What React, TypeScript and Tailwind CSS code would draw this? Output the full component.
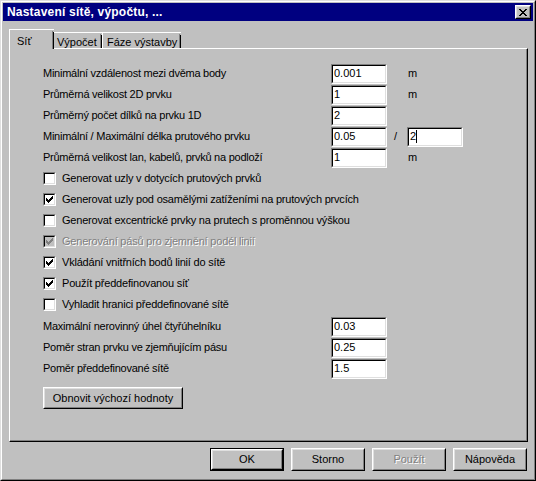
import type { ReactNode } from 'react'

const font = { fontFamily: '"Liberation Sans", Arial, sans-serif' }

function CheckMark({ color = '#000' }: { color?: string }) {
  // classic 7x7 pixel check
  const rows = ['......x', '.....xx', 'x...xxx', 'xx.xxx.', 'xxxxx..', '.xxx...', '..x....']
  return (
    <svg width="7" height="7" viewBox="0 0 7 7" shapeRendering="crispEdges">
      {rows.flatMap((r, y) =>
        r.split('').map((c, x) => (c === 'x' ? <rect key={`${x}-${y}`} x={x} y={y} width="1" height="1" fill={color} /> : null))
      )}
    </svg>
  )
}

function CloseGlyph() {
  const rows = ['xx....xx', '.xx..xx.', '..xxxx..', '...xx...', '..xxxx..', '.xx..xx.', 'xx....xx']
  return (
    <svg width="8" height="7" viewBox="0 0 8 7" shapeRendering="crispEdges">
      {rows.flatMap((r, y) =>
        r.split('').map((c, x) => (c === 'x' ? <rect key={`${x}-${y}`} x={x} y={y} width="1" height="1" fill="#000" /> : null))
      )}
    </svg>
  )
}

function Field({ value, w = 'w-[56px]', caret }: { value: string; w?: string; caret?: boolean }) {
  return (
    <div className={`${w} h-[20px] border border-t-[#808080] border-l-[#808080] border-r-white border-b-white`}>
      <div className="h-full border border-t-black border-l-black border-r-[#dfdfdf] border-b-[#dfdfdf] bg-white flex items-center pl-[1px] text-[11px] text-black">
        {value}
        {caret && <span className="inline-block w-[1px] h-[13px] bg-black" />}
      </div>
    </div>
  )
}

function Check({ checked, disabled, children }: { checked?: boolean; disabled?: boolean; children: ReactNode }) {
  return (
    <div className="h-[21px] flex items-center">
      <div className="w-[13px] h-[13px] border border-t-[#808080] border-l-[#808080] border-r-white border-b-white">
        <div
          className={`w-full h-full border border-t-black border-l-black border-r-[#dfdfdf] border-b-[#dfdfdf] flex items-center justify-center ${
            disabled ? 'bg-[#c0c0c0]' : 'bg-white'
          }`}
        >
          {checked && <CheckMark color={disabled ? '#808080' : '#000'} />}
        </div>
      </div>
      <span
        className={`ml-[6px] text-[11px] tracking-[-0.2px] ${disabled ? 'text-[#808080] [text-shadow:1px_1px_0_#fff]' : 'text-black'}`}
      >
        {children}
      </span>
    </div>
  )
}

function Btn({ children, w = 'w-[74px]', h = 'h-[23px]', def, disabled }: { children: ReactNode; w?: string; h?: string; def?: boolean; disabled?: boolean }) {
  const body = (
    <div className="h-full border border-t-white border-l-white border-r-black border-b-black">
      <div className="h-full border border-t-[#dfdfdf] border-l-[#dfdfdf] border-r-[#808080] border-b-[#808080] flex items-center justify-center">
        <span className={`text-[11px] ${disabled ? 'text-[#808080] [text-shadow:1px_1px_0_#fff]' : 'text-black'}`}>{children}</span>
      </div>
    </div>
  )
  return def ? <div className={`${w} ${h} border border-black`}>{body}</div> : <div className={`${w} ${h}`}>{body}</div>
}

function Row({ label, children }: { label: string; children: ReactNode }) {
  return (
    <div className="h-[21px] flex items-center">
      <span className="w-[288px] text-[11px] tracking-[-0.25px] text-black">{label}</span>
      {children}
    </div>
  )
}

export default function App() {
  return (
    <div style={font} className="w-[536px] h-[481px] bg-[#c0c0c0] border border-t-[#dfdfdf] border-l-[#dfdfdf] border-r-black border-b-black">
      <div className="h-full border border-t-white border-l-white border-r-[#808080] border-b-[#808080] p-[1px] flex flex-col">
        {/* title bar */}
        <div className="h-[18px] bg-[#000080] flex items-center justify-between pl-[4px] pr-[2px]">
          <span className="text-[12px] font-bold text-white tracking-[0.2px]">Nastavení sítě, výpočtu, ...</span>
          <div className="w-[16px] h-[14px] border border-t-white border-l-white border-r-black border-b-black bg-[#c0c0c0]">
            <div className="h-full border border-t-[#dfdfdf] border-l-[#dfdfdf] border-r-[#808080] border-b-[#808080] flex items-center justify-center">
              <CloseGlyph />
            </div>
          </div>
        </div>

        {/* tabs */}
        <div className="mt-[8px] h-[20px] flex items-end pl-[6px] relative z-10">
          <div className="w-[45px] h-[20px] bg-[#c0c0c0] border-t border-l border-t-white border-l-white flex">
            <div className="flex-1 text-[11px] text-black pl-[7px] pt-[3px]">Síť</div>
            <div className="w-[1px] bg-[#808080] mt-[1px]" />
            <div className="w-[1px] bg-black mt-[2px]" />
          </div>
          <div className="w-[48px] h-[16px] mb-[1px] border-t border-t-white flex">
            <div className="flex-1 text-[11px] text-black pl-[3px] pt-[1px]">Výpočet</div>
            <div className="w-[1px] bg-[#808080] mt-[1px]" />
            <div className="w-[1px] bg-black mt-[2px]" />
          </div>
          <div className="w-[79px] h-[16px] mb-[1px] border-t border-l border-t-white border-l-white flex">
            <div className="flex-1 text-[11px] text-black pl-[4px] pt-[1px]">Fáze výstavby</div>
            <div className="w-[1px] bg-[#808080] mt-[1px]" />
            <div className="w-[1px] bg-black mt-[2px]" />
          </div>
        </div>

        {/* panel */}
        <div className="-mt-[1px] ml-[6px] mr-[5px] h-[394px] border border-t-white border-l-white border-r-black border-b-black">
          <div className="h-full border-r border-b border-r-[#808080] border-b-[#808080] pl-[33px] pt-[14px]">
            <Row label="Minimální vzdálenost mezi dvěma body">
              <Field value="0.001" />
              <span className="ml-[21px] text-[11px]">m</span>
            </Row>
            <Row label="Průměrná velikost 2D prvku">
              <Field value="1" />
              <span className="ml-[21px] text-[11px]">m</span>
            </Row>
            <Row label="Průměrný počet dílků na prvku 1D">
              <Field value="2" />
            </Row>
            <Row label="Minimální / Maximální délka prutového prvku">
              <Field value="0.05" />
              <span className="ml-[7px] w-[13px] text-[11px]">/</span>
              <Field value="2" caret />
            </Row>
            <Row label="Průměrná velikost lan, kabelů, prvků na podloží">
              <Field value="1" />
              <span className="ml-[21px] text-[11px]">m</span>
            </Row>

            <Check>Generovat uzly v dotycích prutových prvků</Check>
            <Check checked>Generovat uzly pod osamělými zatíženími na prutových prvcích</Check>
            <Check>Generovat excentrické prvky na prutech s proměnnou výškou</Check>
            <Check checked disabled>Generování pásů pro zjemnění podél linií</Check>
            <Check checked>Vkládání vnitřních bodů linií do sítě</Check>
            <Check checked>Použít předdefinovanou síť</Check>
            <Check>Vyhladit hranici předdefinované sítě</Check>

            <div className="mt-[1px]">
              <Row label="Maximální nerovinný úhel čtyřúhelníku">
                <Field value="0.03" />
              </Row>
              <Row label="Poměr stran prvku ve zjemňujícím pásu">
                <Field value="0.25" />
              </Row>
              <Row label="Poměr předdefinované sítě">
                <Field value="1.5" />
              </Row>
            </div>

            <div className="mt-[8px]">
              <Btn w="w-[140px]" h="h-[22px]">Obnovit výchozí hodnoty</Btn>
            </div>
          </div>
        </div>

        {/* bottom buttons */}
        <div className="mt-[6px] mr-[6px] flex justify-end gap-[7px]">
          <Btn def>OK</Btn>
          <Btn>Storno</Btn>
          <Btn disabled>Použít</Btn>
          <Btn>Nápověda</Btn>
        </div>
      </div>
    </div>
  )
}
